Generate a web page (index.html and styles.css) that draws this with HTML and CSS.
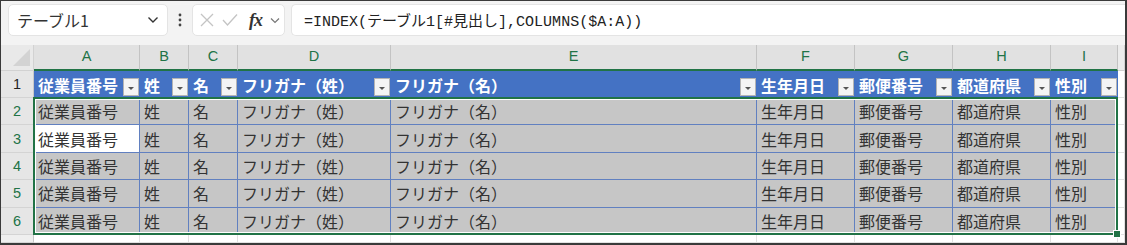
FILE: index.html
```html
<!DOCTYPE html>
<html lang="ja">
<head>
  <meta charset="UTF-8" />
  <title>テーブル1</title>
  <link rel="stylesheet" href="styles.css">
</head>
<body>
  <div class="frame">

    <!-- Formula bar -->
    <div class="formula-bar">
      <div class="name-box">
        <span>テーブル1</span>
        <svg width="12" height="8" viewBox="0 0 12 8"><polyline points="1.5,1.5 6,6 10.5,1.5" fill="none" stroke="#333" stroke-width="1.4"/></svg>
      </div>
      <svg class="dots" width="4" height="14" viewBox="0 0 4 14"><circle cx="2" cy="2" r="1.4" fill="#444"/><circle cx="2" cy="7" r="1.4" fill="#444"/><circle cx="2" cy="12" r="1.4" fill="#444"/></svg>
      <div class="fx-box">
        <svg width="14" height="14" viewBox="0 0 14 14"><path d="M1 1 L13 13 M13 1 L1 13" stroke="#c4c4c4" stroke-width="1.3"/></svg>
        <svg width="16" height="14" viewBox="0 0 16 14"><polyline points="1,7 5.5,12 15,1.5" fill="none" stroke="#c4c4c4" stroke-width="1.3"/></svg>
        <i class="fx">fx</i>
        <svg width="10" height="7" viewBox="0 0 10 7"><polyline points="1,1.5 5,5.5 9,1.5" fill="none" stroke="#777" stroke-width="1.2"/></svg>
      </div>
      <div class="formula">=INDEX(テーブル1[#見出し],COLUMNS($A:A))</div>
    </div>

    <!-- Sheet -->
    <div class="sheet">
      <div class="ch corner"><span class="tri"></span></div>
      <div class="ch on">A</div><div class="ch on">B</div><div class="ch on">C</div><div class="ch on">D</div><div class="ch on">E</div>
      <div class="ch on">F</div><div class="ch on">G</div><div class="ch on">H</div><div class="ch on">I</div><div class="ch"></div>

      <div class="rh">1</div>
      <div class="th"><span>従業員番号</span><b class="filter"></b></div>
      <div class="th"><span>姓</span><b class="filter"></b></div>
      <div class="th"><span>名</span><b class="filter"></b></div>
      <div class="th"><span>フリガナ（姓）</span><b class="filter"></b></div>
      <div class="th"><span>フリガナ（名）</span><b class="filter"></b></div>
      <div class="th"><span>生年月日</span><b class="filter"></b></div>
      <div class="th"><span>郵便番号</span><b class="filter"></b></div>
      <div class="th"><span>都道府県</span><b class="filter"></b></div>
      <div class="th"><span>性別</span><b class="filter"></b></div>
      <div class="empty"></div>

      <div class="rh sel">2</div>
      <div class="td">従業員番号</div><div class="td">姓</div><div class="td">名</div><div class="td">フリガナ（姓）</div><div class="td">フリガナ（名）</div>
      <div class="td">生年月日</div><div class="td">郵便番号</div><div class="td">都道府県</div><div class="td">性別</div><div class="empty"></div>

      <div class="rh sel">3</div>
      <div class="td active">従業員番号</div><div class="td">姓</div><div class="td">名</div><div class="td">フリガナ（姓）</div><div class="td">フリガナ（名）</div>
      <div class="td">生年月日</div><div class="td">郵便番号</div><div class="td">都道府県</div><div class="td">性別</div><div class="empty"></div>

      <div class="rh sel">4</div>
      <div class="td">従業員番号</div><div class="td">姓</div><div class="td">名</div><div class="td">フリガナ（姓）</div><div class="td">フリガナ（名）</div>
      <div class="td">生年月日</div><div class="td">郵便番号</div><div class="td">都道府県</div><div class="td">性別</div><div class="empty"></div>

      <div class="rh sel">5</div>
      <div class="td">従業員番号</div><div class="td">姓</div><div class="td">名</div><div class="td">フリガナ（姓）</div><div class="td">フリガナ（名）</div>
      <div class="td">生年月日</div><div class="td">郵便番号</div><div class="td">都道府県</div><div class="td">性別</div><div class="empty"></div>

      <div class="rh sel">6</div>
      <div class="td">従業員番号</div><div class="td">姓</div><div class="td">名</div><div class="td">フリガナ（姓）</div><div class="td">フリガナ（名）</div>
      <div class="td">生年月日</div><div class="td">郵便番号</div><div class="td">都道府県</div><div class="td">性別</div><div class="empty"></div>

      <div class="rh last"></div>
      <div class="empty"></div><div class="empty"></div><div class="empty"></div><div class="empty"></div><div class="empty"></div>
      <div class="empty"></div><div class="empty"></div><div class="empty"></div><div class="empty"></div><div class="empty"></div>

      <!-- selected range A2:I6 -->
      <div class="selection"><span class="handle"></span></div>
    </div>

  </div>
</body>
</html>
```

FILE: styles.css
```css
body {
  margin: 0;
  background: #fff;
  font-family: "Noto Sans CJK JP", sans-serif;
}

.frame {
  width: 1127px;
  height: 245px;
  box-sizing: border-box;
  border: 1px solid #3a3a3a;
  border-right-width: 2px;
  border-bottom-width: 2px;
  overflow: hidden;
  display: flex;
  flex-direction: column;
}

/* formula bar */

.formula-bar {
  height: 44px;
  flex: none;
  box-sizing: border-box;
  padding: 3px 0 0 7px;
  background: #f3f3f3;
  display: flex;
  align-items: flex-start;
}

.name-box,
.fx-box,
.formula {
  height: 32px;
  box-sizing: border-box;
  background: #fff;
  border: 1px solid #e4e4e4;
  border-radius: 5px;
  display: flex;
  align-items: center;
}

.name-box {
  width: 160px;
  padding: 0 8px 0 8px;
  justify-content: space-between;
  font-size: 16px;
  color: #333;
}

.dots {
  margin: 9px 10px 0 10px;
}

.fx-box {
  width: 93px;
  padding: 0 4px 0 7px;
  gap: 8px;
}

.fx {
  font-family: "Liberation Serif", serif;
  font-size: 18px;
  font-weight: bold;
  color: #333;
  margin-left: 3px;
  letter-spacing: -1px;
}

.formula {
  flex: 1;
  margin-left: 6px;
  padding-left: 12px;
  border-right: none;
  border-radius: 5px 0 0 5px;
  font-family: "Liberation Mono", "Noto Sans CJK JP", monospace;
  font-size: 15px;
  color: #222;
}

/* sheet grid */

.sheet {
  position: relative;
  flex: 1;
  display: grid;
  grid-template-columns: 33px 106px 49px 49px 153px 366px 98px 98px 98px 67px 1fr;
  grid-template-rows: 26px 27px repeat(5, 27.4px) 1fr;
  font-size: 16px;
}

.ch {
  background: #ececec;
  border-right: 1px solid #d2d2d2;
  border-bottom: 1px solid #d2d2d2;
  box-sizing: border-box;
  font-family: "Liberation Sans", sans-serif;
  font-size: 14.5px;
  text-align: center;
  padding-top: 3px;
}

.ch.on {
  background: #e1e1e1;
  color: #217346;
  border-right-color: #c3c3c3;
  border-bottom: 2px solid #217346;
}

.corner {
  position: relative;
  background: #e9e9e9;
}

.tri {
  position: absolute;
  right: 3px;
  bottom: 4px;
  border-style: solid;
  border-width: 0 0 17px 17px;
  border-color: transparent transparent #d3d3d3 transparent;
}

.rh {
  background: #e6e6e6;
  border-right: 1px solid #c8c8c8;
  border-bottom: 1px solid #d4d4d4;
  box-sizing: border-box;
  font-family: "Liberation Sans", sans-serif;
  font-size: 14.5px;
  display: flex;
  align-items: center;
  justify-content: center;
  color: #222;
}

.rh.sel {
  color: #217346;
}

.rh.last {
  background: #efefef;
}

.th {
  background: #4472c4;
  color: #fff;
  font-weight: bold;
  display: flex;
  align-items: center;
  justify-content: space-between;
  padding-left: 4px;
  white-space: nowrap;
  overflow: hidden;
}

.filter {
  align-self: flex-end;
  flex: none;
  width: 16px;
  height: 18px;
  margin: 0 1px 2px 0;
  box-sizing: border-box;
  background: #f4f4f4;
  border: 1px solid #b4b4b4;
  position: relative;
}

.filter::after {
  content: "";
  position: absolute;
  left: 4px;
  top: 8px;
  border-style: solid;
  border-width: 3px 3px 0 3px;
  border-color: #555 transparent transparent transparent;
}

.td {
  background: #c6c6c6;
  color: #333;
  border-right: 1px solid #6180c0;
  border-bottom: 1px solid #6180c0;
  box-sizing: border-box;
  padding-left: 4px;
  display: flex;
  align-items: center;
  white-space: nowrap;
  overflow: hidden;
}

.td.active {
  background: #fff;
}

.empty {
  background: #fff;
  border-right: 1px solid #e1e1e1;
  border-bottom: 1px solid #e1e1e1;
  box-sizing: border-box;
}

.selection {
  position: absolute;
  left: 32px;
  top: 52px;
  width: 1085px;
  height: 138px;
  box-sizing: border-box;
  border: 2px solid #217346;
  box-shadow: inset 0 0 0 1px #fff;
  pointer-events: none;
}

.handle {
  position: absolute;
  right: -5px;
  bottom: -5px;
  width: 6px;
  height: 6px;
  background: #217346;
  border: 1px solid #fff;
}
```
